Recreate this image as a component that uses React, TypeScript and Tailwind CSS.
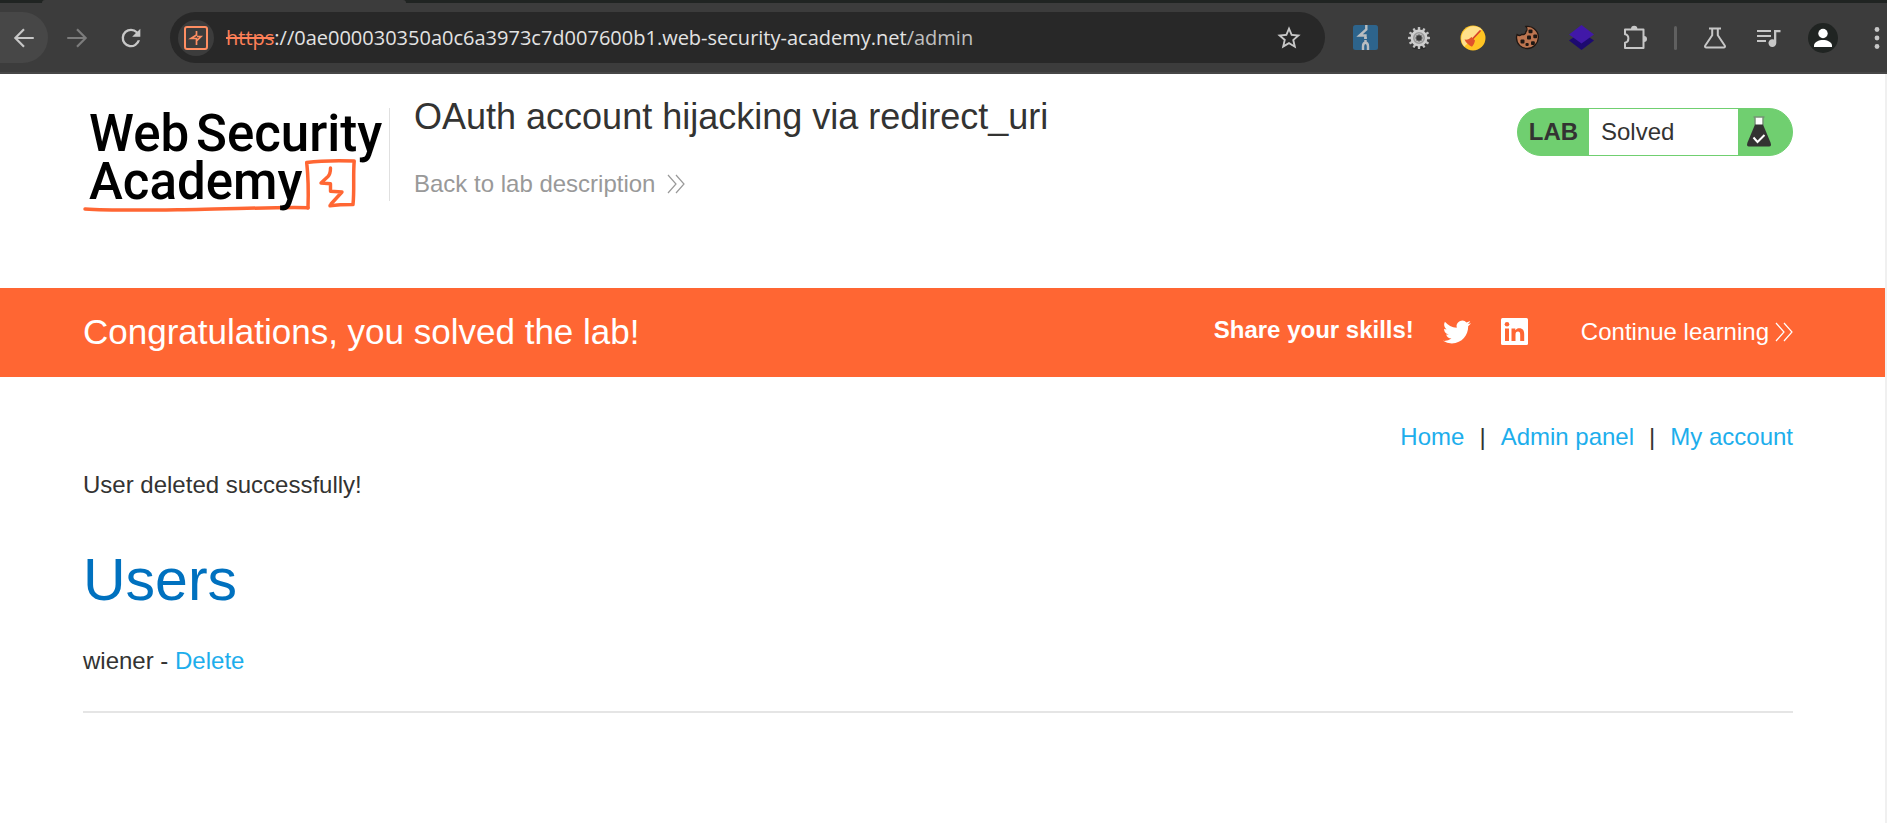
import React from "react";

const sans = "font-['Liberation_Sans',Arial,sans-serif]";

function ToolButton({ label, children }: { label: string; children: React.ReactNode }) {
  return (
    <button type="button" aria-label={label} className="flex h-full w-[54px] shrink-0 items-center justify-center">
      {children}
    </button>
  );
}

const Stroke = ({ size, color = "#c7c7c7", children }: { size: number; color?: string; children: React.ReactNode }) => (
  <svg width={size} height={size} viewBox="0 0 24 24" fill="none" stroke={color} strokeWidth="2" aria-hidden="true">
    {children}
  </svg>
);

function Gear() {
  const teeth = Array.from({ length: 12 }, (_, i) => i * 30);
  return (
    <svg width="24" height="24" viewBox="0 0 24 24" aria-hidden="true">
      <ellipse cx="12" cy="22" rx="7" ry="1.5" fill="#2b2b2b" />
      <g fill="#c4c4c4">
        {teeth.map((a) => (
          <rect key={a} x="10.8" y="1" width="2.4" height="5" rx="0.6" transform={`rotate(${a} 12 12)`} />
        ))}
      </g>
      <circle cx="12" cy="12" r="8.4" fill="#cfcfcf" />
      <circle cx="12" cy="12" r="5.2" fill="none" stroke="#9a9a9a" strokeWidth="1.6" />
      <circle cx="12" cy="12" r="3.2" fill="#3a3a3a" stroke="#777" />
    </svg>
  );
}

function BrowserBar() {
  return (
    <header className="bg-[#3c3c3c]">
      <div className="flex h-[3px] bg-[#202422]">
        <div className="ml-[42px] w-[364px] rounded-t-[3px] bg-[#3c3c3c]" />
      </div>
      <div className="flex h-[71px] items-center border-b-2 border-[#474747]">
        <button
          type="button"
          aria-label="Back"
          className="flex h-[51px] w-12 shrink-0 items-center justify-center rounded-r-full rounded-l-[22px] bg-[#474747]"
        >
          <Stroke size={26}>
            <path d="M21 12H4.500M12 4l-8 8 8 8" />
          </Stroke>
        </button>
        <div className="ml-0.5 flex h-full">
          <ToolButton label="Forward">
            <Stroke size={26} color="#7c7c7c">
              <path d="M3 12h16.500M12 4l8 8-8 8" />
            </Stroke>
          </ToolButton>
          <ToolButton label="Reload">
            <svg width="28" height="28" viewBox="0 0 24 24" fill="#c7c7c7" aria-hidden="true">
              <path d="M17.650 6.350A7.900 7.900 0 0 0 12 4a8 8 0 1 0 7.730 10h-2.080A6 6 0 1 1 12 6c1.660 0 3.140.69 4.220 1.780L13 11h7V4z" />
            </svg>
          </ToolButton>
        </div>
        <div className="ml-3 flex h-[51px] min-w-0 flex-1 items-center rounded-full bg-[#282828] pr-[22px] pl-2">
          <button
            type="button"
            aria-label="Site information"
            className="flex size-9 shrink-0 items-center justify-center rounded-full bg-[#3c3c3c]"
          >
            <svg width="24" height="24" viewBox="0 0 24 24" fill="none" stroke="#ff8e62" aria-hidden="true">
              <rect x="1" y="1" width="22" height="22" rx="2" strokeWidth="2" />
              <path d="M12.500 5v4L7 12.500h5.500V19M12.500 15l4.500-4.500h-4" strokeWidth="1.700" />
            </svg>
          </button>
          <div className="ml-3 min-w-0 flex-1 truncate font-['Open_Sans','Noto_Sans',sans-serif] text-[20px] leading-8 text-[#e3e3e3]">
            <span className="text-[#ff8058] line-through">https</span>
            ://0ae000030350a0c6a3973c7d007600b1.web-security-academy.net
            <span className="text-[#c0c0c0]">/admin</span>
          </div>
          <button type="button" aria-label="Bookmark this page" className="shrink-0">
            <svg width="28" height="28" viewBox="0 0 24 24" fill="#c7c7c7" aria-hidden="true">
              <path d="m22 9.240-7.190-.62L12 2 9.190 8.630 2 9.240l5.460 4.730L5.820 21 12 17.270 18.180 21l-1.630-7.030L22 9.240zM12 15.400l-3.760 2.270 1-4.280-3.320-2.880 4.380-.38L12 6.100l1.710 4.040 4.380.38-3.320 2.880 1 4.280L12 15.400z" />
            </svg>
          </button>
        </div>
        <div className="ml-[13px] flex h-full shrink-0 items-center">
          <ToolButton label="Proxy tool">
            <svg width="25" height="25" viewBox="0 0 25 25" aria-hidden="true">
              <rect width="25" height="25" rx="2.500" fill="#2d648c" />
              <path d="M13.300 0v4.500L6.500 10.500h6v3.500" fill="none" stroke="#b9bdc0" strokeWidth="2.400" />
              <path d="M12.500 12v5" stroke="#b9bdc0" strokeWidth="2.400" strokeDasharray="2 1" />
              <path d="M10 25v-3.500c0-2.500 1-3.700 2.500-3.700s2.500 1.200 2.500 3.700V25" fill="none" stroke="#b9bdc0" strokeWidth="2.400" />
            </svg>
          </ToolButton>
          <ToolButton label="Settings extension">
            <Gear />
          </ToolButton>
          <ToolButton label="Cache cleaner">
            <svg width="26" height="26" viewBox="0 0 26 26" aria-hidden="true">
              <circle cx="13" cy="13" r="12.500" fill="#ffc423" />
              <path d="M4.200 21.800A12.500 12.500 0 0 1 21.800 4.200z" fill="#ffe08a" />
              <path d="M20 6l-7 7.500" stroke="#d8442a" strokeWidth="1.800" strokeLinecap="round" />
              <path d="M4.500 14.500c3 .5 5-.5 7-2.500l3.500 3.500c-.5 2.500-1.500 4.500-3 6.200-3.300-1.500-5.900-3.700-7.500-7.200z" fill="#e0522c" />
            </svg>
          </ToolButton>
          <ToolButton label="Cookie editor">
            <svg width="25" height="25" viewBox="0 0 25 25" aria-hidden="true">
              <path
                d="M11 1.500c3-.5 6 .2 8.200 2.200C22 6 23.800 9 23.300 13c-.3 5.500-5 10.500-10.600 10.500C6.500 23.800 1.500 19 1.500 13c0-1.500.2-2.500.6-3.500 1.500 1.200 3.700 1 4.900-.2C8.400 10 11 8.800 10.900 6.800 12.300 5.500 12.300 3 11 1.500z"
                fill="#bd7550"
                stroke="#1f1713"
                strokeWidth="1.300"
              />
              <g fill="#1f1713">
                <rect x="13.500" y="4.500" width="4" height="3.700" rx="1" />
                <rect x="18.300" y="9.500" width="3.800" height="3.800" rx="1" />
                <rect x="12" y="10.500" width="4" height="4" rx="1" />
                <rect x="5.500" y="14.500" width="4" height="4" rx="1" />
                <rect x="16" y="16.300" width="3.800" height="3.600" rx="1" />
                <rect x="10.500" y="18" width="3.200" height="3" rx="1" />
              </g>
            </svg>
          </ToolButton>
          <ToolButton label="Layers extension">
            <svg width="25" height="25" viewBox="0 0 25 25" aria-hidden="true">
              <path d="M0 15.500 12.500 7 25 15.500 12.500 25z" fill="#1d0a70" />
              <path d="M0 9.500 12.500 0 25 9.500 12.500 18.500z" fill="#4118a8" />
            </svg>
          </ToolButton>
          <ToolButton label="Extensions">
            <svg width="25" height="25" viewBox="0 0 25 25" fill="none" aria-hidden="true">
              <path
                d="M2 4.500h18.500v18.500H2v-5.300c4.500-.7 4.500-7.700 0-8.400z"
                stroke="#c7c7c7"
                strokeWidth="2"
                strokeLinejoin="round"
              />
              <path d="M8 4a3.200 3.200 0 0 1 6.400 0zM21 11a3 3 0 0 1 0 6z" fill="#c7c7c7" />
            </svg>
          </ToolButton>
          <div className="flex w-[26px] justify-center">
            <div className="h-6 w-[3px] rounded-full bg-[#606060]" />
          </div>
          <ToolButton label="Experiments">
            <svg width="22" height="22" viewBox="0 0 22 22" fill="none" stroke="#c7c7c7" strokeWidth="2" aria-hidden="true">
              <path d="M5 1.500h12M8.200 1.500v6.700L1.300 18.500c-.7 1.200 0 2 1 2h17.400c1 0 1.700-.8 1-2L13.800 8.200V1.500" strokeLinejoin="round" />
            </svg>
          </ToolButton>
          <ToolButton label="Media controls">
            <svg width="24" height="20" viewBox="0 0 24 20" fill="#c7c7c7" aria-hidden="true">
              <path d="M0 2h14v2H0zM0 7h14v2H0zM0 12h9v2H0zM17 2h6.500v2.300H19.300V15a3.900 3.900 0 1 1-2.300-3.500z" />
            </svg>
          </ToolButton>
          <ToolButton label="Profile">
            <svg width="30" height="30" viewBox="0 0 30 30" aria-hidden="true">
              <circle cx="15" cy="15" r="15" fill="#202422" />
              <circle cx="15" cy="10.500" r="4.700" fill="#fff" />
              <path d="M6 24v-1.500c0-3.500 5-5.500 9-5.500s9 2 9 5.500V24z" fill="#fff" />
            </svg>
          </ToolButton>
          <button type="button" aria-label="Browser menu" className="flex h-full w-[37px] items-center pl-6">
            <svg width="6" height="22" viewBox="0 0 6 22" fill="#c7c7c7" aria-hidden="true">
              <circle cx="3" cy="2.500" r="2.400" />
              <circle cx="3" cy="11" r="2.400" />
              <circle cx="3" cy="19.500" r="2.400" />
            </svg>
          </button>
        </div>
      </div>
    </header>
  );
}

function AcademyLogo() {
  return (
    <svg width="306" height="118" viewBox="0 -8 306 118" role="img" aria-label="Web Security Academy" className="shrink-0">
      <g fill="none" stroke="#ff6633" strokeLinecap="round" strokeLinejoin="round">
        <path d="M2 103c30 2 70 1 112 .5 40-.6 75-2.500 111-1.800" strokeWidth="3.500" />
        <path d="M225 102c.5-15 .3-31-1.300-45.500 15-2 31-2 47.500-1.500-1.200 14 .3 29-1.200 43.500-8 0-16 .3-23 1.300" strokeWidth="3.500" />
        <path d="M247.500 62c0 4-1 7-2.500 8.500l-7 6.500 9.500.8v7.500l11.500.7L248 98" strokeWidth="3.400" />
      </g>
      <g fill="#000" fontFamily="Roboto, sans-serif" fontWeight="500" fontSize="51">
        <text x="6" y="45">Web</text>
        <text x="113" y="45">Security</text>
        <text x="6" y="93">Academy</text>
      </g>
    </svg>
  );
}

function Chevrons({ color }: { color: string }) {
  return (
    <svg width="18" height="20" viewBox="0 0 18 20" fill="none" stroke={color} strokeWidth="1.200" aria-hidden="true">
      <path d="M1 1l8 9-8 9M9 1l8 9-8 9" />
    </svg>
  );
}

function LabHeader() {
  return (
    <section className="flex h-[214px] items-start pr-[92px] pl-[83px]">
      <div className="mt-6">
        <AcademyLogo />
      </div>
      <div className="mt-[34px] h-[93px] w-px shrink-0 bg-[#e0e0e0]" />
      <div className="mt-[21px] ml-6 flex-1">
        <h2 className="text-[36px] leading-[44px]">OAuth account hijacking via redirect_uri</h2>
        <a href="#description" className="mt-[27px] inline-flex items-center gap-3 text-2xl leading-9 text-[#999]">
          Back to lab description
          <Chevrons color="#999" />
        </a>
      </div>
      <div className="mt-[34px] flex h-12 w-[276px] shrink-0 overflow-hidden rounded-full border border-[#70cf70] bg-[#70cf70] text-2xl">
        <span className="flex w-[71px] items-center justify-center font-bold">LAB</span>
        <span className="flex flex-1 items-center bg-white pl-3">Solved</span>
        <span className="flex w-[54px] items-center pl-2">
          <svg width="26" height="32" viewBox="0 0 26 32" aria-hidden="true">
            <path d="M9.500 1.500h7V9h-7z" fill="#fff" />
            <path d="M7.500 1h11M9 1.500V9M17 1.500V9" stroke="#777" />
            <path d="M9 8.500h8l7.500 18c1 2.500.5 4-1.500 4H3c-2 0-2.500-1.500-1.500-4z" fill="#333332" />
            <path d="M7.500 21.500l4 4.500 7-7" fill="none" stroke="#fff" strokeWidth="2" />
          </svg>
        </span>
      </div>
    </section>
  );
}

function SolvedBanner() {
  return (
    <section className="flex h-[89px] items-center bg-[#ff6633] pr-[92px] pb-0.5 pl-[83px] text-2xl text-white">
      <h4 className="flex-1 text-[35px] leading-10">Congratulations, you solved the lab!</h4>
      <span className="pb-1 leading-7 font-bold">Share your skills!</span>
      <a href="#twitter" aria-label="Share on Twitter" className="ml-[29px]">
        <svg width="28" height="28" viewBox="0 0 24 24" fill="#fff" aria-hidden="true">
          <path d="M23.953 4.570a10 10 0 0 1-2.825.775 4.958 4.958 0 0 0 2.163-2.723c-.951.555-2.005.959-3.127 1.184a4.920 4.920 0 0 0-8.384 4.482C7.690 8.095 4.067 6.130 1.640 3.162a4.822 4.822 0 0 0-.666 2.475c0 1.710.87 3.213 2.188 4.096a4.904 4.904 0 0 1-2.228-.616v.06a4.923 4.923 0 0 0 3.946 4.827 4.996 4.996 0 0 1-2.212.085 4.936 4.936 0 0 0 4.604 3.417 9.867 9.867 0 0 1-6.102 2.105c-.39 0-.779-.023-1.170-.067a13.995 13.995 0 0 0 7.557 2.209c9.053 0 13.998-7.496 13.998-13.985 0-.21 0-.42-.015-.63A9.935 9.935 0 0 0 24 4.590z" />
        </svg>
      </a>
      <a href="#linkedin" aria-label="Share on LinkedIn" className="ml-[30px]">
        <svg width="27" height="27" viewBox="0 0 27 27" aria-hidden="true">
          <rect width="27" height="27" rx="1.500" fill="#fff" />
          <g fill="#ff6633">
            <circle cx="6" cy="6.300" r="2.300" />
            <path d="M4 10.500h4V23H4zM10.500 10.500h3.800v1.800c1-1.500 2.200-2.100 4-2.100 3.500 0 4.900 2.200 4.900 5.800v7h-4v-6.300c0-2-.7-3.100-2.200-3.100-1.700 0-2.500 1.200-2.500 3.200V23h-4z" />
          </g>
        </svg>
      </a>
      <a href="#learning" className="ml-[53px] flex items-center gap-1.5 leading-7">
        Continue learning
        <Chevrons color="#fff" />
      </a>
    </section>
  );
}

export default function App() {
  return (
    <div className={`${sans} min-h-screen bg-white text-[#333332]`}>
      <BrowserBar />
      <div className="min-h-[749px] border-r-2 border-[#f0f0f0]">
        <LabHeader />
        <SolvedBanner />
        <main className="pt-[42px] pr-[92px] pl-[83px] text-2xl leading-9">
          <nav className="flex justify-end gap-[15px]">
            <a href="#home" className="text-[#1daeec]">Home</a>
            <span>|</span>
            <a href="#admin" className="text-[#1daeec]">Admin panel</a>
            <span>|</span>
            <a href="#account" className="text-[#1daeec]">My account</a>
          </nav>
          <p className="mt-3">User deleted successfully!</p>
          <h1 className="mt-[41px] text-[59px] leading-[72px] text-[#0071bf]">Users</h1>
          <p className="mt-[27px]">
            wiener - <a href="#delete" className="text-[#1daeec]">Delete</a>
          </p>
          <hr className="mt-8 border-t-2 border-[#e5e5e5]" />
        </main>
      </div>
    </div>
  );
}
